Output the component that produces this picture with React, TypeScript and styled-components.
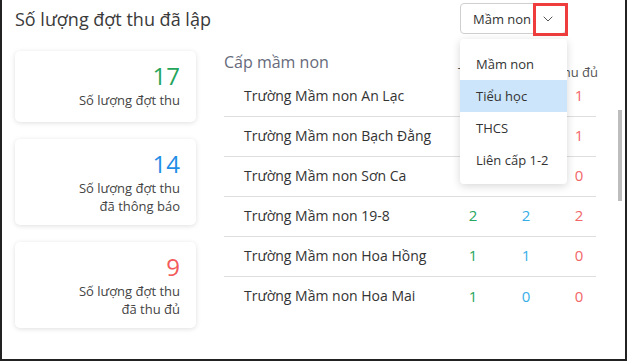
import React from 'react';
import styled, { createGlobalStyle } from 'styled-components';
import { ChevronDown } from 'lucide-react';

type Tone = 'green' | 'blue' | 'red';

type School = {
  name: string;
  total: number;
  notified: number;
  paid: number;
};

const levels = ['Mầm non', 'Tiểu học', 'THCS', 'Liên cấp 1-2'];

const stats: { value: number; tone: Tone; label: string[] }[] = [
  { value: 17, tone: 'green', label: ['Số lượng đợt thu'] },
  { value: 14, tone: 'blue', label: ['Số lượng đợt thu', 'đã thông báo'] },
  { value: 9, tone: 'red', label: ['Số lượng đợt thu', 'đã thu đủ'] },
];

const schools: School[] = [
  { name: 'Trường Mầm non An Lạc', total: 3, notified: 2, paid: 1 },
  { name: 'Trường Mầm non Bạch Đằng', total: 2, notified: 2, paid: 1 },
  { name: 'Trường Mầm non Sơn Ca', total: 1, notified: 1, paid: 0 },
  { name: 'Trường Mầm non 19-8', total: 2, notified: 2, paid: 2 },
  { name: 'Trường Mầm non Hoa Hồng', total: 1, notified: 1, paid: 0 },
  { name: 'Trường Mầm non Hoa Mai', total: 1, notified: 0, paid: 0 },
];

const cardColors: Record<Tone, string> = {
  green: '#24a55c',
  blue: '#1f8ee6',
  red: '#f25a5c',
};

const cellColors: Record<Tone, string> = {
  green: '#27a55d',
  blue: '#38aee8',
  red: '#f26668',
};

const App = () => {
  return (
    <>
      <GlobalStyle />
      <Frame>
        <Header>
          <Title>Số lượng đợt thu đã lập</Title>
          <Dropdown>
            <SelectBox>
              <span>Mầm non</span>
              <ChevronDown size={16} strokeWidth={1.5} color="#555" />
            </SelectBox>
            <Highlight />
            <Menu>
              {levels.map((level) => (
                <MenuItem key={level} active={level === 'Tiểu học'}>
                  {level}
                </MenuItem>
              ))}
            </Menu>
          </Dropdown>
        </Header>

        <Body>
          <Cards>
            {stats.map((stat) => (
              <StatCard key={stat.value}>
                <StatValue tone={stat.tone}>{stat.value}</StatValue>
                {stat.label.map((line) => (
                  <StatLabel key={line}>{line}</StatLabel>
                ))}
              </StatCard>
            ))}
          </Cards>

          <Panel>
            <TableHead>
              <GroupTitle>Cấp mầm non</GroupTitle>
              <ColumnTitle>Tổng</ColumnTitle>
              <ColumnTitle>Đã thông báo</ColumnTitle>
              <ColumnTitle alignEnd>Đã thu đủ</ColumnTitle>
            </TableHead>
            <ListArea>
              <List>
                {schools.map((school) => (
                  <Row key={school.name}>
                    <SchoolName>{school.name}</SchoolName>
                    <Cell tone="green">{school.total}</Cell>
                    <Cell tone="blue">{school.notified}</Cell>
                    <Cell tone="red">{school.paid}</Cell>
                  </Row>
                ))}
              </List>
              <ScrollTrack>
                <ScrollThumb />
              </ScrollTrack>
            </ListArea>
          </Panel>
        </Body>
      </Frame>
    </>
  );
};

export default App;

/* Styles */

const GlobalStyle = createGlobalStyle`
  html, body {
    margin: 0;
    padding: 0;
    background: #ffffff;
  }
  body {
    font-family: 'Open Sans', 'Noto Sans', sans-serif;
    color: #333333;
  }
`;

const Frame = styled.div`
  position: relative;
  width: 627px;
  height: 361px;
  box-sizing: border-box;
  border: 2px solid #222222;
  border-top: none;
  background: #ffffff;
  overflow: hidden;
`;

const Header = styled.div`
  display: flex;
  justify-content: space-between;
  align-items: flex-start;
  height: 48px;
  box-sizing: border-box;
  padding: 3px 59px 0 13px;
`;

const Title = styled.h1`
  margin: 2px 0 0;
  font-size: 18px;
  line-height: 28px;
  font-weight: 400;
  color: #3a3a3a;
`;

const Dropdown = styled.div`
  position: relative;
  z-index: 2;
`;

const SelectBox = styled.div`
  display: flex;
  align-items: center;
  justify-content: space-between;
  width: 106px;
  height: 31px;
  box-sizing: border-box;
  padding: 0 9px 0 12px;
  border: 1px solid #cfcfcf;
  border-radius: 4px;
  font-size: 13px;
  color: #333333;
`;

const Highlight = styled.div`
  position: absolute;
  left: 73px;
  top: 0;
  width: 35px;
  height: 33px;
  box-sizing: border-box;
  border: 3px solid #ef3d3d;
`;

const Menu = styled.ul`
  position: absolute;
  left: 0;
  top: 36px;
  width: 107px;
  margin: 0;
  padding: 9px 0 8px;
  list-style: none;
  background: #ffffff;
  border-radius: 4px;
  box-shadow: 0 2px 8px rgba(0, 0, 0, 0.16);
`;

const MenuItem = styled.li<{ active?: boolean }>`
  height: 32px;
  padding-left: 16px;
  display: flex;
  align-items: center;
  font-size: 13px;
  color: #333333;
  background: ${(p) => (p.active ? '#cce5fa' : 'transparent')};
`;

const Body = styled.div`
  display: flex;
  gap: 28px;
  padding: 0 3px 0 13px;
`;

const Cards = styled.div`
  display: flex;
  flex-direction: column;
  gap: 17px;
  width: 181px;
  margin-top: 3px;
`;

const StatCard = styled.div`
  min-height: 71px;
  box-sizing: border-box;
  padding: 10px 16px 10px;
  background: #ffffff;
  border-radius: 5px;
  box-shadow: 0 1px 5px rgba(0, 0, 0, 0.13);
  text-align: right;
`;

const StatValue = styled.div<{ tone: Tone }>`
  font-size: 24px;
  line-height: 30px;
  color: ${(p) => cardColors[p.tone]};
`;

const StatLabel = styled.div`
  font-size: 13px;
  line-height: 18px;
  color: #444444;
`;

const Panel = styled.div`
  flex: 1;
  display: flex;
  flex-direction: column;
`;

const TableHead = styled.div`
  display: grid;
  grid-template-columns: 1fr 34px 72px 34px;
  height: 29px;
  margin-right: 26px;
`;

const GroupTitle = styled.div`
  align-self: start;
  padding-top: 3px;
  font-size: 16px;
  line-height: 22px;
  color: #666a7b;
`;

const ColumnTitle = styled.div<{ alignEnd?: boolean }>`
  align-self: end;
  justify-self: ${(p) => (p.alignEnd ? 'end' : 'center')};
  margin-bottom: -3px;
  margin-right: ${(p) => (p.alignEnd ? '-2px' : '0')};
  font-size: 13px;
  line-height: 16px;
  white-space: nowrap;
  color: #555555;
`;

const ListArea = styled.div`
  display: flex;
  align-items: flex-start;
  gap: 22px;
`;

const List = styled.div`
  flex: 1;
`;

const ScrollTrack = styled.div`
  width: 4px;
  height: 239px;
  padding-top: 33px;
  box-sizing: border-box;
`;

const ScrollThumb = styled.div`
  height: 91px;
  background: #bdbdbd;
`;

const Row = styled.div`
  display: grid;
  grid-template-columns: 1fr 34px 72px 34px;
  align-items: center;
  height: 40px;
  box-sizing: border-box;
  padding-bottom: 3px;
  border-bottom: 1px solid #dedede;

  &:last-child {
    border-bottom: none;
  }
`;

const SchoolName = styled.div`
  padding-left: 20px;
  font-size: 14px;
  color: #333333;
  white-space: nowrap;
`;

const Cell = styled.div<{ tone: Tone }>`
  text-align: center;
  font-size: 15px;
  color: ${(p) => cellColors[p.tone]};
`;
